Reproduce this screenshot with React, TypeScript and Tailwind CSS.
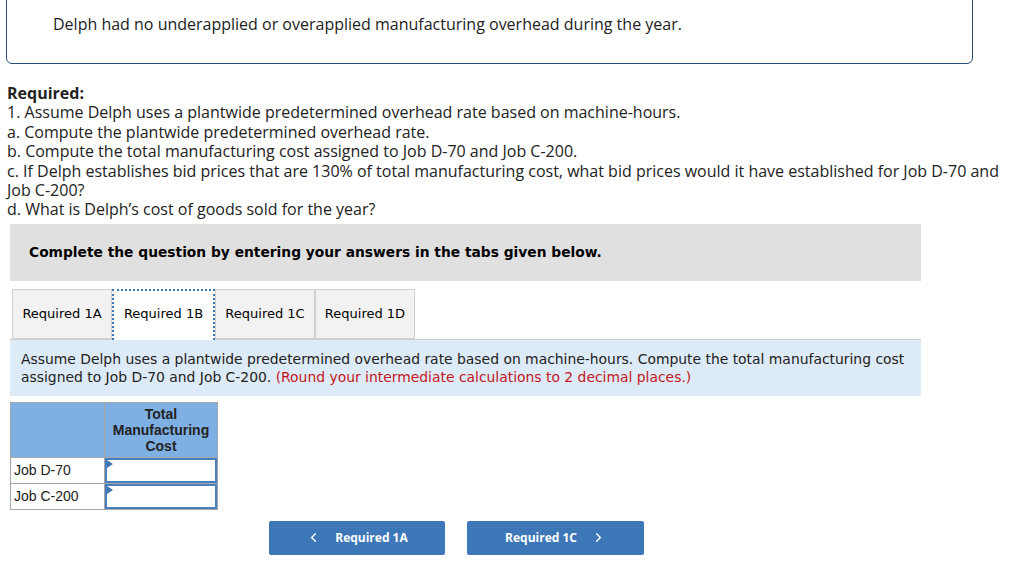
import { ChevronLeft, ChevronRight } from 'lucide-react'

const main = { fontFamily: '"Open Sans", Lato, sans-serif' }
const verdana = { fontFamily: '"DejaVu Sans", Verdana, sans-serif' }
const arial = { fontFamily: '"Liberation Sans", Arial, sans-serif' }

const tabs = ['Required 1A', 'Required 1B', 'Required 1C', 'Required 1D']

export default function App() {
  return (
    <div className="h-[563px] w-[1024px] overflow-hidden bg-white text-[#222]" style={main}>
      <div className="-mt-[10px] ml-[6px] w-[967px] rounded-b-[6px] border border-[#2a4d7a] pb-[28px] pt-[22px]">
        <p className="pl-[46px] text-[16px] leading-[22px]">
          Delph had no underapplied or overapplied manufacturing overhead during the year.
        </p>
      </div>

      <div className="mt-[20px] w-[1015px] pl-[7px] text-[16px] leading-[19.4px]">
        <p className="font-bold">Required:</p>
        <p>1. Assume Delph uses a plantwide predetermined overhead rate based on machine-hours.</p>
        <p>a. Compute the plantwide predetermined overhead rate.</p>
        <p>b. Compute the total manufacturing cost assigned to Job D-70 and Job C-200.</p>
        <p>
          c. If Delph establishes bid prices that are 130% of total manufacturing cost, what bid prices would it have
          established for Job D-70 and Job C-200?
        </p>
        <p>d. What is Delph’s cost of goods sold for the year?</p>
      </div>

      <div className="ml-[10px] w-[911px]" style={verdana}>
        <div className="mt-[4px] flex h-[57px] items-center bg-[#e0e0e0] pl-[19px] text-[13.8px] font-bold text-black">
          Complete the question by entering your answers in the tabs given below.
        </div>

        <div className="mt-[8px] flex pl-[2px] text-[13px] text-black">
          {tabs.map((t) =>
            t === 'Required 1B' ? (
              <div
                key={t}
                className="relative z-10 -mb-px flex h-[51px] w-[103px] items-center justify-center border-2 border-b-0 border-dotted border-[#3d77b8] bg-white pb-[3px]"
              >
                {t}
              </div>
            ) : (
              <div
                key={t}
                className="flex h-[50px] w-[100px] items-center justify-center border border-[#cfcfcf] bg-[#f2f2f2]"
              >
                {t}
              </div>
            )
          )}
        </div>

        <div className="border-t border-[#cfcfcf] bg-[#ddeaf7] px-[11px] pb-[10px] pt-[10px] text-[13.9px] leading-[18px] text-[#222]">
          Assume Delph uses a plantwide predetermined overhead rate based on machine-hours. Compute the total
          manufacturing cost assigned to Job D-70 and Job C-200.{' '}
          <span className="text-[#c4161c]">(Round your intermediate calculations to 2 decimal places.)</span>
        </div>
      </div>

      <table className="ml-[10px] mt-[6px] border-collapse text-[14px]" style={arial}>
        <thead>
          <tr className="bg-[#7eb0e4]">
            <th className="h-[55px] w-[94px] border border-[#a6a6a6]"></th>
            <th className="w-[113px] border border-[#a6a6a6] text-[14px] font-bold leading-[16px] text-[#222]">
              Total
              <br />
              Manufacturing
              <br />
              Cost
            </th>
          </tr>
        </thead>
        <tbody>
          {['Job D-70', 'Job C-200'].map((r) => (
            <tr key={r}>
              <td className="h-[26px] border border-[#a6a6a6] pl-[3px] text-[#222]">{r}</td>
              <td className="border border-[#a6a6a6] p-0">
                <div className="relative h-[25px] border-2 border-[#4a7fbf] bg-white">
                  <div className="absolute left-0 top-0 h-0 w-0 border-y-[4px] border-l-[6px] border-y-transparent border-l-[#3d77b8]" />
                </div>
              </td>
            </tr>
          ))}
        </tbody>
      </table>

      <div className="ml-[269px] mt-[11px] flex gap-[22px] text-[12px] font-bold text-white">
        <button className="flex h-[34px] w-[176px] items-center justify-center gap-[14px] rounded-[2px] bg-[#3d77b8]">
          <ChevronLeft size={15} strokeWidth={2.2} />
          <span>Required 1A</span>
        </button>
        <button className="flex h-[34px] w-[177px] items-center justify-center gap-[14px] rounded-[2px] bg-[#3d77b8]">
          <span>Required 1C</span>
          <ChevronRight size={15} strokeWidth={2.2} />
        </button>
      </div>
    </div>
  )
}
